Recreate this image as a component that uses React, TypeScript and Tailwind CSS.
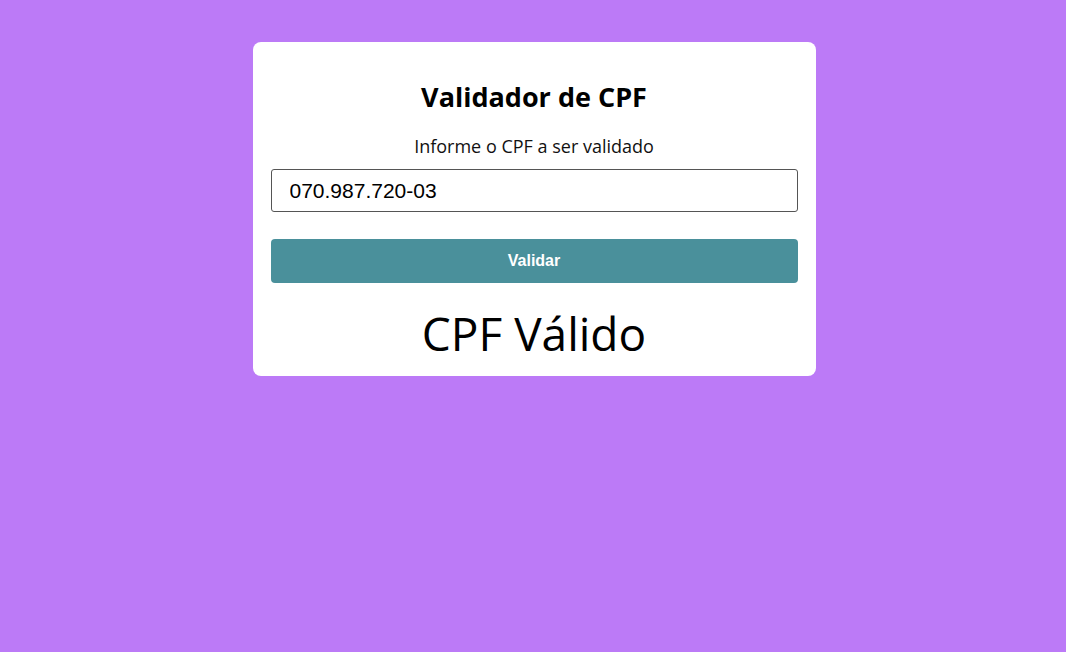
import { useState } from "react";

const App: React.FC = () => {
    const [cpf, setCpf] = useState<string>("070.987.720-03");

    return (
        <div className="min-h-[652px] w-full bg-[#bc7af7] flex justify-center pt-[42px] pl-[2px]">
            <div className="w-[563px] h-[334px] bg-white rounded-lg px-[18px] pt-[35px] flex flex-col items-center font-['Open_Sans',sans-serif]">
                <h1 className="text-[27px] leading-[40px] font-bold text-black">Validador de CPF</h1>
                <p className="mt-[16px] text-[18px] leading-[26px] text-[#111]">Informe o CPF a ser validado</p>
                <input
                    className="mt-[10px] w-full h-[43px] border border-[#555] rounded-[3px] px-[18px] text-[21px] text-black font-['Liberation_Sans',Arial,sans-serif] outline-none"
                    value={cpf}
                    onChange={e => setCpf(e.target.value)}
                />
                <button className="mt-[27px] w-full h-[44px] bg-[#4a909b] rounded-[4px] text-white text-[16px] font-bold font-['Liberation_Sans',Arial,sans-serif]">
                    Validar
                </button>
                <p className="mt-[19px] text-[46px] leading-[62px] text-black">CPF Válido</p>
            </div>
        </div>
    );
};

export default App;
